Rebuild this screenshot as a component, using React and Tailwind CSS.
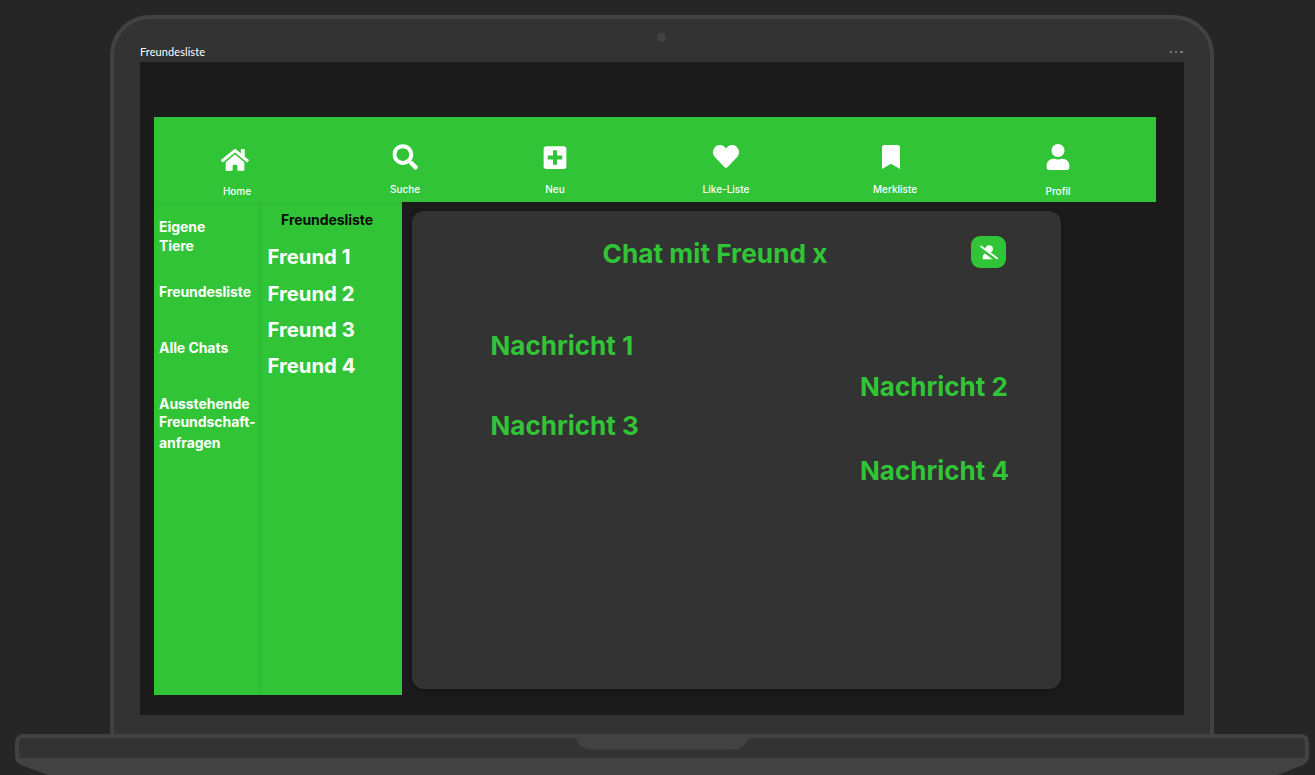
import React from "react";
import { FaHome, FaSearch, FaPlusSquare, FaHeart, FaBookmark, FaUser } from "react-icons/fa";

const navItems = [
  { label: "Home", Icon: FaHome, cell: "ml-[23px] pt-[30px]", icon: "w-[28px] h-[25px] -translate-x-[2px] translate-y-[0.5px]", text: "mt-[13px]" },
  { label: "Suche", Icon: FaSearch, cell: "ml-[48px] pt-[27px]", icon: "w-[25.5px] h-[26px] translate-x-[0.5px]", text: "mt-[13px]" },
  { label: "Neu", Icon: FaPlusSquare, cell: "ml-[30px] pt-[27px]", icon: "w-[26px] h-[26px] translate-y-[0.5px]", text: "mt-[13px]" },
  { label: "Like-Liste", Icon: FaHeart, cell: "ml-[51px] pt-[26px]", icon: "w-[26px] h-[26px] translate-y-[0.5px]", text: "mt-[14px]" },
  { label: "Merkliste", Icon: FaBookmark, cell: "ml-[49px] pt-[28px]", icon: "w-[24px] h-[24px] -translate-x-[4px]", text: "mt-[14px]" },
  { label: "Profil", Icon: FaUser, cell: "ml-[43px] pt-[27px]", icon: "w-[26px] h-[26px]", text: "mt-[15px]" },
];

function RemoveFriendIcon() {
  return (
    <svg className="h-[15px] w-[18px]" viewBox="0 0 18 15">
      <circle cx="9.2" cy="4" r="3.7" fill="#fff" />
      <path d="M2.7 14.2V12.6Q2.7 8 7 8H9.5L15 13.2V14.2Z" fill="#fff" />
      <path d="M1.2 3.6L16 14.8" stroke="#31c437" strokeWidth="3.2" />
      <path d="M1.1 1.5L17 13.2" stroke="#fff" strokeWidth="1.9" strokeLinecap="round" />
    </svg>
  );
}

function TopNav() {
  return (
    <nav className="flex h-[85px] w-[1002px] shrink-0 bg-[#31c437]">
      {navItems.map(({ label, Icon, cell, icon, text }) => (
        <a key={label} className={`flex w-[120px] shrink-0 flex-col items-center ${cell}`}>
          <Icon className={`shrink-0 ${icon}`} />
          <span className={`text-[10px] font-medium leading-3 whitespace-nowrap ${text}`}>{label}</span>
        </a>
      ))}
    </nav>
  );
}

function Sidebar() {
  return (
    <aside className="flex w-[108px] shrink-0 flex-col bg-[linear-gradient(to_bottom,rgba(0,0,0,0.04),transparent_5px),linear-gradient(to_left,rgba(0,0,0,0.05),transparent_6px)] bg-[#31c437] pl-[5px] pt-[15px] text-[14px] font-bold leading-[19px] tracking-[-0.06px] whitespace-nowrap">
      <div>Eigene<br />Tiere</div>
      <div className="mt-[27px]">Freundesliste</div>
      <div className="mt-[37px]">Alle Chats</div>
      <div className="mt-[37px]">
        <div>Ausstehende</div>
        <div className="-mt-px">Freundschaft-</div>
        <div className="mt-[2px]">anfragen</div>
      </div>
    </aside>
  );
}

function FriendList() {
  return (
    <section className="w-[140px] shrink-0 bg-[#31c437] bg-[linear-gradient(to_bottom,rgba(0,0,0,0.04),transparent_5px)] pt-[8px] whitespace-nowrap">
      <h2 className="pl-[19px] text-[14px] font-bold leading-5 tracking-[-0.06px] text-[#0b0b0b]">Freundesliste</h2>
      <ul className="mt-[9px] pl-[5.5px] text-[20.3px] font-bold leading-9">
        <li>Freund 1</li>
        <li className="mt-px">Freund 2</li>
        <li>Freund 3</li>
        <li>Freund 4</li>
      </ul>
    </section>
  );
}

function Chat() {
  return (
    <main className="ml-[10px] mt-[9px] h-[478px] w-[649px] rounded-[12px] bg-[#333333] text-[26px] font-bold leading-8 text-[#31c437] shadow-[0_2px_5px_rgba(0,0,0,0.25)]">
      <header className="flex pt-[25px] pl-[190.5px] pr-[55px]">
        <h1 className="mt-[2px] text-[26.25px] whitespace-nowrap">Chat mit Freund x</h1>
        <button className="ml-auto flex h-8 w-[35px] items-center justify-center rounded-[9px] bg-[#31c437] text-white">
          <RemoveFriendIcon />
        </button>
      </header>
      <div className="flex flex-col pl-[78.5px] pt-[60px] whitespace-nowrap">
        <p>Nachricht 1</p>
        <p className="mt-[9px] pl-[369.5px]">Nachricht 2</p>
        <p className="mt-[7px]">Nachricht 3</p>
        <p className="mt-[13px] pl-[369.5px]">Nachricht 4</p>
      </div>
    </main>
  );
}

export default function App() {
  return (
    <div className="flex h-[775px] w-[1315px] flex-col overflow-hidden bg-[#262626] font-['Inter',sans-serif] text-white">
      <div className="ml-[110px] mt-[15px] h-[719px] w-[1104px] shrink-0 rounded-t-[40px] border-4 border-b-0 border-[#424242] bg-[#333333] px-[26px]">
        <div className="ml-[516.5px] mt-[14px] h-[9px] w-[9px] rounded-full bg-[#424242]" />
        <div className="flex h-[20px] items-end justify-between">
          <span className="mb-[2px] text-[11px] font-normal leading-4 tracking-[0.08px] font-['Lato',sans-serif]">Freundesliste</span>
          <span className="mb-[9px] mr-px flex gap-[3px]">
            <i className="h-[2px] w-[2px] bg-[#777777]" />
            <i className="h-[2px] w-[2px] bg-[#777777]" />
            <i className="h-[2px] w-[3px] bg-[#777777]" />
          </span>
        </div>
        <div className="flex h-[653px] w-[1044px] flex-col bg-[#1b1b1b] pl-[14px] pt-[55px]">
          <TopNav />
          <div className="flex h-[493px]">
            <Sidebar />
            <FriendList />
            <Chat />
          </div>
        </div>
      </div>
      <svg className="ml-[15px] block h-[41px] w-[1294px] shrink-0" viewBox="0 0 1294 41">
        <path d="M9 0H1285Q1294 0 1294 9V22Q1294 28 1288 31L1263 41H33L6 31Q0 28 0 22V9Q0 0 9 0Z" fill="#424242" />
        <path d="M9 4H1285Q1290 4 1290 9V21Q1290 24 1288 24H6Q4 24 4 21V9Q4 4 9 4Z" fill="#333333" />
        <path d="M560 3H734Q730 15 718 15.7H576Q564 15 560 3Z" fill="#424242" />
      </svg>
    </div>
  );
}
